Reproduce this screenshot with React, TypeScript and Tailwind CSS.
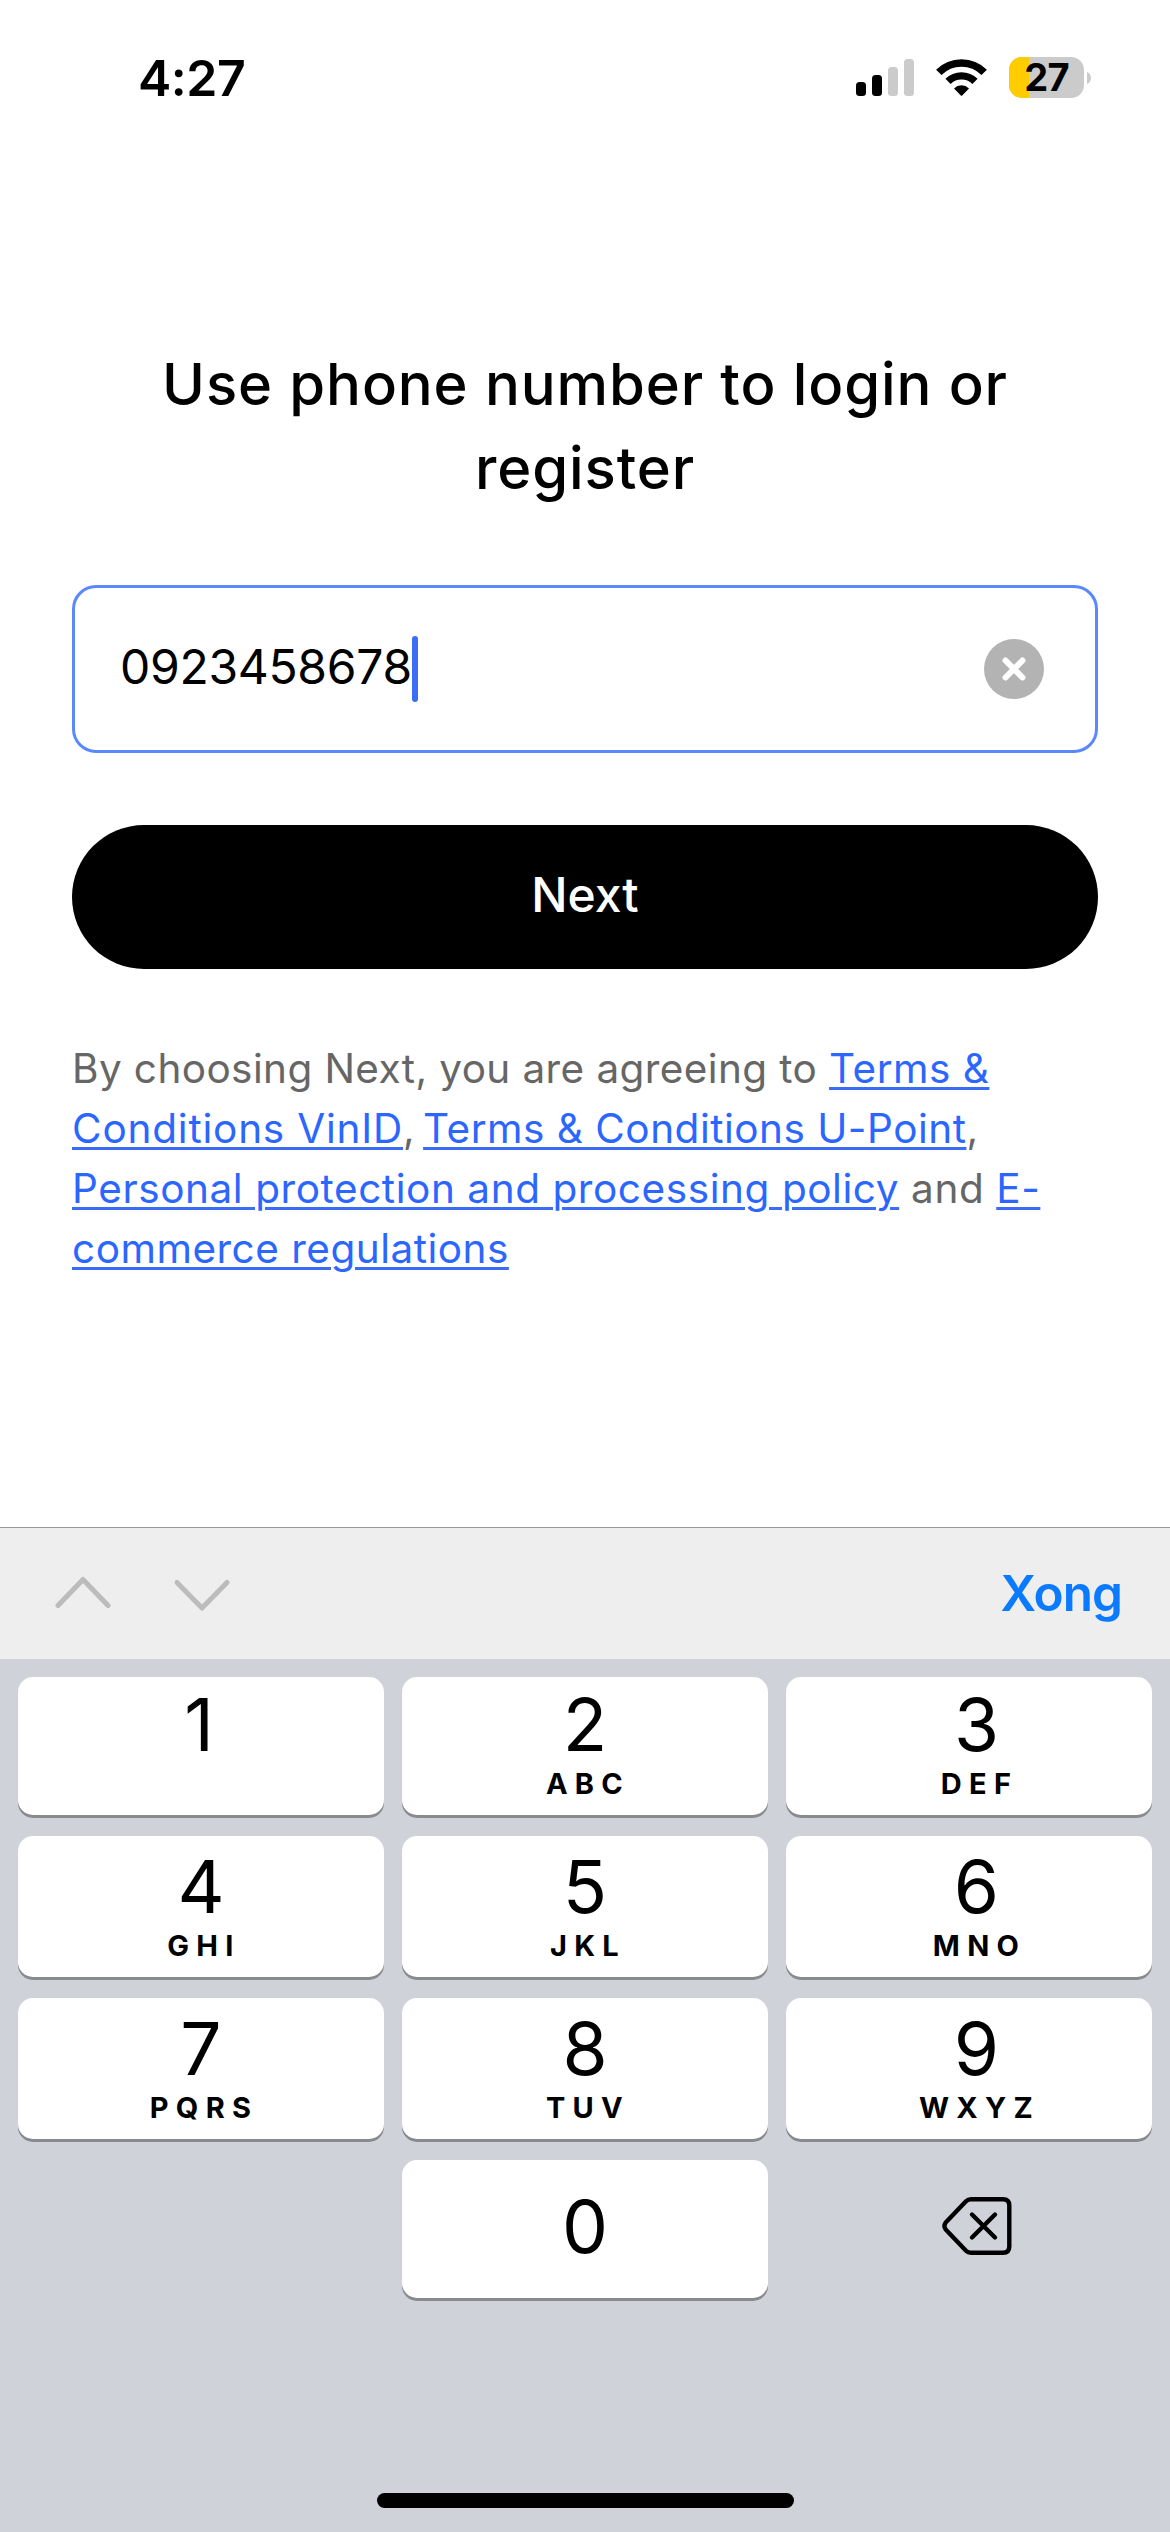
type KeyDef = { digit: string; letters?: string };

const rows: { keys: KeyDef[]; className: string; pad: string }[] = [
  { keys: [{ digit: "1" }, { digit: "2", letters: "ABC" }, { digit: "3", letters: "DEF" }], className: "h-[138px]", pad: "pt-[21px]" },
  { keys: [{ digit: "4", letters: "GHI" }, { digit: "5", letters: "JKL" }, { digit: "6", letters: "MNO" }], className: "h-[141px]", pad: "pt-6" },
  { keys: [{ digit: "7", letters: "PQRS" }, { digit: "8", letters: "TUV" }, { digit: "9", letters: "WXYZ" }], className: "h-[141px]", pad: "pt-6" },
];

function Key({ digit, letters, pad, last }: KeyDef & { pad: string; last?: boolean }) {
  return (
    <button
      className={`flex h-full w-[366px] flex-col items-center rounded-[15px] bg-white shadow-[0_3px_0_#898a8d] ${pad} ${last ? "pl-[15px]" : ""}`}
    >
      <span className={`text-[73px] leading-[54px] ${digit === "1" ? "pr-[4px]" : ""}`}>{digit}</span>
      {letters && (
        <span className="mt-[21px] pl-[6px] text-[29px] font-bold leading-[21px] tracking-[7.3px]">{letters}</span>
      )}
    </button>
  );
}

function StatusBar() {
  return (
    <header className="flex h-[156px] items-start pl-[138px] pr-[79px] pt-[57px]">
      <span className="mt-[1px] text-[50px] font-semibold leading-[40px] tracking-[-0.5px]">4:27</span>
      <div className="ml-auto flex items-start">
        <svg className="mt-[2px] h-[37px] w-[58px]" viewBox="0 0 58 37">
          <rect x="0" y="23" width="10" height="14" rx="3.5" fill="#000" />
          <rect x="16" y="16" width="10" height="21" rx="3.5" fill="#000" />
          <rect x="32" y="8" width="10" height="29" rx="3.5" fill="#cbcbcb" />
          <rect x="48" y="0" width="10" height="37" rx="3.5" fill="#cbcbcb" />
        </svg>
        <svg className="ml-[22px] mt-[2px] h-[37px] w-[51px]" viewBox="0 0 51 37">
          <path d="M2.8 13.4 A32 32 0 0 1 48.2 13.4" fill="none" stroke="#000" strokeWidth="7.6" />
          <path d="M12 22.4 A19.2 19.2 0 0 1 39 22.4" fill="none" stroke="#000" strokeWidth="7.4" />
          <path d="M18 29.4 A10.8 10.8 0 0 1 33 29.4 L26.4 36.2 Q25.5 37.2 24.6 36.2 Z" fill="#000" />
        </svg>
        <div className="relative ml-[22px] flex h-[41px] w-[75px] items-center justify-center rounded-[13px] bg-[#cbcbcb]">
          <div className="absolute inset-y-0 left-0 w-[20px] rounded-l-[13px] bg-[#ffcc00]" />
          <span className="relative text-[38px] font-[650] leading-[41px] tracking-[-0.8px]">27</span>
        </div>
        <svg className="ml-[3px] mt-[15px] h-[12px] w-[4px]" viewBox="0 0 4 12">
          <path d="M0 0 C5.3 2.4 5.3 9.6 0 12 Z" fill="#cbcbcb" />
        </svg>
      </div>
    </header>
  );
}

function Link({ children, wide }: { children: string; wide?: boolean }) {
  return (
    <a
      className={`text-[#2b66ff] underline decoration-[#3a6cf8] decoration-[3px] underline-offset-[4px] ${wide ? "tracking-[0.8px]" : ""}`}
    >
      {children}
    </a>
  );
}

export default function App() {
  return (
    <div className="flex h-[2532px] w-[1170px] flex-col bg-white font-['Inter',sans-serif] text-black">
      <StatusBar />
      <main className="flex flex-1 flex-col px-[72px] pt-[186px]">
        <h1 className="text-center text-[58px] font-[540] leading-[84px] tracking-[0.9px]">
          Use phone number to login or
          <br />
          register
        </h1>
        <div className="mt-[75px] flex h-[168px] items-center rounded-[24px] border-[3px] border-[#5a88ff] pl-[45px] pr-[51px]">
          <span className="mb-[5px] text-[48px] leading-[60px] tracking-[-0.3px]">0923458678</span>
          <span className="h-[66px] w-[6px] rounded-full bg-[#3b6ef5]" />
          <svg className="ml-auto h-[60px] w-[60px]" viewBox="0 0 60 60">
            <circle cx="30" cy="30" r="30" fill="#b3b3b3" />
            <path d="M21.5 21.5 L38.5 38.5 M38.5 21.5 L21.5 38.5" stroke="#fff" strokeWidth="6" strokeLinecap="round" />
          </svg>
        </div>
        <button className="mt-[72px] flex h-[144px] items-center justify-center rounded-full bg-black pb-[4px] text-[48px] font-medium text-white">
          Next
        </button>
        <p className="mt-[70px] whitespace-nowrap text-[40.5px] leading-[60px] tracking-[0.5px] text-[#666]">
          <span className="tracking-[0.4px]">By choosing Next, you are agreeing to </span>
          <Link>Terms &amp;</Link>
          <br />
          <Link wide>Conditions VinID</Link>
          <span className="tracking-[-1.5px]">, </span>
          <Link>Terms &amp; Conditions U-Point</Link>,<br />
          <span className="tracking-[0.57px]">
            <Link>Personal protection and processing policy</Link> and <Link>E-</Link>
          </span>
          <br />
          <Link>commerce regulations</Link>
        </p>
      </main>
      <section className="flex h-[132px] items-center border-t border-[#98989a] bg-[#eee] pl-[54px] pr-[48px]">
        <svg className="h-[36px] w-[58px]" viewBox="0 0 58 36">
          <path d="M4 29.5 L29 3.5 L54 29.5" fill="none" stroke="#bcbcbc" strokeWidth="5" strokeLinecap="round" strokeLinejoin="round" />
        </svg>
        <svg className="ml-[61px] h-[36px] w-[58px]" viewBox="0 0 58 36">
          <path d="M4 6.5 L29 32 L54 6.5" fill="none" stroke="#bcbcbc" strokeWidth="5" strokeLinecap="round" strokeLinejoin="round" />
        </svg>
        <span className="ml-auto text-[49.5px] font-semibold tracking-[-1px] text-[#0a7aff]">Xong</span>
      </section>
      <section className="flex h-[873px] flex-col bg-[#cfd2d8] px-[18px] pt-[18px]">
        <div className="flex flex-col gap-[21px]">
          {rows.map((row, i) => (
            <div key={i} className={`flex gap-[18px] ${row.className}`}>
              {row.keys.map((k, j) => (
                <Key key={k.digit} {...k} pad={row.pad} last={j === 2} />
              ))}
            </div>
          ))}
          <div className="flex h-[138px] gap-[18px]">
            <div className="w-[366px]" />
            <Key digit="0" pad="pt-[40px]" />
            <button className="flex w-[366px] items-center justify-center pb-[6px] pl-[15px]">
              <svg className="h-[60px] w-[70px]" viewBox="0 0 70 60">
                <path d="M29 3.2 H61 Q67.3 3.2 67.3 9.5 V50.5 Q67.3 56.8 61 56.8 H29 Q26 56.8 24 54.8 L3.7 33.6 Q1.2 30 3.7 26.4 L24 5.2 Q26 3.2 29 3.2 Z" fill="none" stroke="#000" strokeWidth="4.4" strokeLinejoin="round" />
                <path d="M30 18.5 L53 41.5 M53 18.5 L30 41.5" stroke="#000" strokeWidth="4.4" strokeLinecap="round" />
              </svg>
            </button>
          </div>
        </div>
        <div className="mx-auto mb-6 mt-auto h-[15px] w-[417px] rounded-full bg-black" />
      </section>
    </div>
  );
}
